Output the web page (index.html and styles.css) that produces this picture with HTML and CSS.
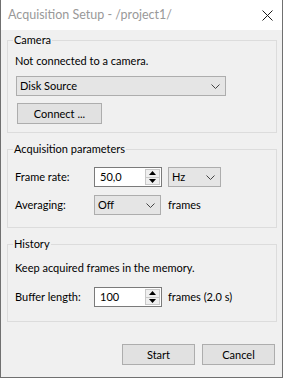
FILE: index.html
```html
<!DOCTYPE html>
<html lang="en">
<head>
    <meta charset="UTF-8">
    <title>Acquisition Setup - /project1/</title>
    <link rel="stylesheet" href="styles.css">
</head>
<body>
    <div class="window">
        <div class="titlebar">
            <span class="title">Acquisition Setup - /project1/</span>
            <svg class="close" width="11" height="11" viewBox="0 0 11 11">
                <path d="M0.5 0.5 L10.5 10.5 M10.5 0.5 L0.5 10.5" stroke="#1a1a1a" stroke-width="1" fill="none"/>
            </svg>
        </div>

        <div class="content">
            <div class="group">
                <div class="group-title">Camera</div>
                <div class="line first">Not connected to a camera.</div>
                <div class="combo combo-source">
                    <span>Disk Source</span>
                    <svg class="chevron" width="9" height="5" viewBox="0 0 9 5"><path d="M0.5 0.5 L4.5 4.5 L8.5 0.5" stroke="#444" fill="none"/></svg>
                </div>
                <div class="button connect">Connect ...</div>
            </div>

            <div class="group">
                <div class="group-title">Acquisition parameters</div>
                <div class="row first-row">
                    <span class="label">Frame rate:</span>
                    <div class="spin">
                        <span class="spin-field">50,0</span>
                        <div class="spin-buttons">
                            <span class="spin-btn"><svg width="7" height="4" viewBox="0 0 7 4"><path d="M3.5 0 L7 4 L0 4 Z" fill="#000"/></svg></span>
                            <span class="spin-btn"><svg width="7" height="4" viewBox="0 0 7 4"><path d="M0 0 L7 0 L3.5 4 Z" fill="#000"/></svg></span>
                        </div>
                    </div>
                    <div class="combo combo-unit">
                        <span>Hz</span>
                        <svg class="chevron" width="9" height="5" viewBox="0 0 9 5"><path d="M0.5 0.5 L4.5 4.5 L8.5 0.5" stroke="#444" fill="none"/></svg>
                    </div>
                </div>
                <div class="row second-row">
                    <span class="label">Averaging:</span>
                    <div class="combo combo-avg">
                        <span>Off</span>
                        <svg class="chevron" width="9" height="5" viewBox="0 0 9 5"><path d="M0.5 0.5 L4.5 4.5 L8.5 0.5" stroke="#444" fill="none"/></svg>
                    </div>
                    <span class="suffix">frames</span>
                </div>
            </div>

            <div class="group history">
                <div class="group-title">History</div>
                <div class="line keep">Keep acquired frames in the memory.</div>
                <div class="row buffer-row">
                    <span class="label">Buffer length:</span>
                    <div class="spin">
                        <span class="spin-field">100</span>
                        <div class="spin-buttons">
                            <span class="spin-btn"><svg width="7" height="4" viewBox="0 0 7 4"><path d="M3.5 0 L7 4 L0 4 Z" fill="#000"/></svg></span>
                            <span class="spin-btn"><svg width="7" height="4" viewBox="0 0 7 4"><path d="M0 0 L7 0 L3.5 4 Z" fill="#000"/></svg></span>
                        </div>
                    </div>
                    <span class="suffix buffer-suffix">frames (2.0 s)</span>
                </div>
            </div>

            <div class="actions">
                <div class="button action">Start</div>
                <div class="button action">Cancel</div>
            </div>
        </div>
    </div>
</body>
</html>
```

FILE: styles.css
```css
* {
    margin: 0;
    padding: 0;
    box-sizing: border-box;
}

body {
    font-family: Lato, 'Noto Sans', sans-serif;
    font-size: 11px;
    line-height: 16px;
    color: #000;
    background: #f0f0f0;
}

.window {
    width: 283px;
    height: 378px;
    background: #f0f0f0;
    border: 1px solid #707070;
    border-top: none;
}

.titlebar {
    height: 30px;
    background: #fff;
    display: flex;
    align-items: center;
    padding: 0 9px 0 7px;
}

.title {
    color: #999;
    font-size: 12.5px;
}

.close {
    margin-left: auto;
    margin-top: 0;
}

.content {
    padding: 0 5px 0 6px;
}

.group {
    margin-top: 10px;
    border: 1px solid #dcdcdc;
    padding: 0 7px 8px 7px;
}

.group + .group {
    margin-top: 16px;
}

.group-title {
    display: table;
    margin: -9px 0 0 -2px;
    padding: 0 1px;
    background: #f0f0f0;
}

.line.first {
    margin-top: 5px;
}

.combo {
    height: 20px;
    background: #e5e5e5;
    border: 1px solid #adadad;
    display: flex;
    align-items: center;
    padding: 0 5px 0 3px;
}

.combo .chevron {
    margin-left: auto;
}

.combo-source {
    margin: 7px 0 0 1px;
    width: 210px;
}

.button {
    height: 21px;
    background: #e1e1e1;
    border: 1px solid #adadad;
    display: flex;
    align-items: center;
    justify-content: center;
}

.connect {
    margin: 7px 0 0 2px;
    width: 85px;
}

.row {
    display: flex;
    align-items: center;
    height: 20px;
}

.first-row {
    margin-top: 10px;
}

.second-row {
    margin-top: 8px;
}

.group:nth-child(2) {
    padding-bottom: 12px;
}

.label {
    width: 79px;
    flex-shrink: 0;
}

.spin {
    width: 68px;
    height: 20px;
    display: flex;
    border: 1px solid #7a7a7a;
    background: #fff;
}

.spin-field {
    flex: 1;
    padding-left: 5px;
    line-height: 18px;
}

.spin-buttons {
    width: 16px;
    display: flex;
    flex-direction: column;
    padding: 1px 1px 1px 0;
}

.spin-btn {
    flex: 1;
    display: flex;
    align-items: center;
    justify-content: center;
    background: #efefef;
    border: 1px solid #c8c8c8;
}

.spin-btn + .spin-btn {
    border-top: none;
}

.combo-unit {
    margin-left: 6px;
    width: 53px;
}

.combo-avg {
    width: 67px;
}

.suffix {
    margin-left: 7px;
}

.buffer-suffix {
    margin-left: 6px;
}

.keep {
    margin-top: 8px;
}

.buffer-row {
    margin-top: 11px;
}

.history {
    padding-bottom: 14px;
}

.actions {
    display: flex;
    justify-content: flex-end;
    gap: 7px;
    margin-top: 22px;
    padding-right: 2px;
}

.action {
    width: 73px;
}
```
